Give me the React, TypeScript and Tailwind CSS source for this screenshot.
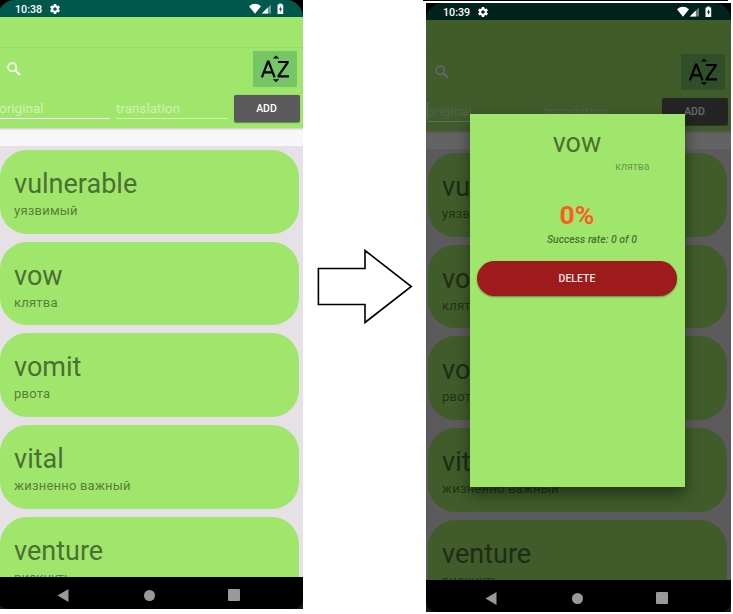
type Word = { original: string; translation: string };

const WORDS: Word[] = [
  { original: "vulnerable", translation: "уязвимый" },
  { original: "vow", translation: "клятва" },
  { original: "vomit", translation: "рвота" },
  { original: "vital", translation: "жизненно важный" },
  { original: "venture", translation: "рискнуть" },
];

function GearIcon() {
  return (
    <svg viewBox="2 2 20 20" className="ml-[7px] h-[10px] w-[10px] fill-white">
      <path d="M19.43 12.98c.04-.32.07-.64.07-.98s-.03-.66-.07-.98l2.11-1.65c.19-.15.24-.42.12-.64l-2-3.46c-.12-.22-.39-.3-.61-.22l-2.49 1c-.52-.4-1.08-.73-1.69-.98l-.38-2.65A.49.49 0 0 0 14 2h-4c-.25 0-.46.18-.49.42l-.38 2.65c-.61.25-1.17.59-1.69.98l-2.49-1c-.23-.09-.49 0-.61.22l-2 3.46c-.13.22-.07.49.12.64l2.11 1.65c-.04.32-.07.65-.07.98s.03.66.07.98l-2.11 1.65c-.19.15-.24.42-.12.64l2 3.46c.12.22.39.3.61.22l2.49-1c.52.4 1.08.73 1.69.98l.38 2.65c.03.24.24.42.49.42h4c.25 0 .46-.18.49-.42l.38-2.65c.61-.25 1.17-.59 1.69-.98l2.49 1c.23.09.49 0 .61-.22l2-3.46c.12-.22.07-.49-.12-.64l-2.11-1.65zM12 15.5c-1.93 0-3.5-1.57-3.5-3.5s1.57-3.5 3.5-3.5 3.5 1.57 3.5 3.5-1.57 3.5-3.5 3.5z" />
    </svg>
  );
}

function StatusBar({ time, dimmed }: { time: string; dimmed: boolean }) {
  return (
    <div className="h-[17px] shrink-0 bg-black">
      <div
        className={`flex h-full items-center rounded-t-[18px] pl-[17px] pr-[19.5px] ${
          dimmed ? "bg-[#00231e]" : "bg-[#00574b]"
        }`}
      >
        <span className="w-[28px] pt-px text-[10.7px] leading-[17px] font-medium whitespace-nowrap text-white">
          {time}
        </span>
        <GearIcon />
        <svg viewBox="0 0 35 12" className="ml-auto h-[12px] w-[35px]">
          <path d="M0 3.2Q6 -1.6 12 3.2L6 10.8Z" fill="#fff" />
          <path d="M22 1.4V10.6H12.8Z" fill="#fff" fillOpacity="0.4" />
          <path d="M18.8 4.6V10.6H12.8Z" fill="#fff" />
          <path d="M28.5 1.5h1.6V.4h2.5v1.1h1.6v9.5h-5.7z" fill="#fff" />
          <path d="M31.9 3.2L29.9 6.6h1.2v2.6l2-3.6h-1.2z" fill={dimmed ? "#00231e" : "#00574b"} />
        </svg>
      </div>
    </div>
  );
}

function SortButton() {
  return (
    <button className="mr-[6px] h-[36px] w-[44px] bg-[#76c667]">
      <svg viewBox="0 0 44 36" className="h-[36px] w-[44px]">
        <path d="M23 4.6L26.2 7.6H19.8Z M23 31.2L26.2 28.2H19.8Z" />
        <g fill="none" stroke="#000" strokeWidth="2.2">
          <path d="M8.9 26.3L14.9 10.6h.7l6 15.7M10.9 21.3h8.7" />
          <path d="M25 11H34.5V12L25.6 24.6V25.3H36" />
        </g>
      </svg>
    </button>
  );
}

function Header({ dimmed }: { dimmed: boolean }) {
  return (
    <header className="relative h-[111px] shrink-0 bg-[#a1e66c] shadow-[0_1px_2px_rgba(0,0,0,0.2)]">
      <div className="h-[31px] border-b border-[#97dc66]" />
      <div className="flex h-[42px] items-center justify-between pl-[8.5px] pb-[1px]">
        <svg viewBox="0 0 14 14" className="h-[14px] w-[14px] fill-none stroke-white">
          <circle cx="5.2" cy="5.2" r="4.1" strokeWidth="1.6" />
          <path d="M8.2 8.2L13 13" strokeWidth="2" />
        </svg>
        <SortButton />
      </div>
      <div className="flex h-[38px] items-start pl-px text-[13.5px] leading-[18px] text-[#cff2b5]">
        <div className="mt-[5px] flex h-[24px] w-[111px] border-b-[1.5px] border-white pt-[4px]">
          <span className={`-mr-px h-[18px] w-px ${dimmed ? "bg-white" : "bg-[#d5f4bd]"}`} />
          <span>original</span>
        </div>
        <div className="mt-[5px] ml-[6px] h-[24px] w-[112px] border-b border-[#d0f2b6] pt-[4px]">translation</div>
        <button className="mt-[5px] ml-[5.5px] h-[27px] w-[66px] rounded-[2px] bg-[#5a5a5c] text-[10.5px] leading-[28px] font-medium text-white shadow-[0_0.5px_1px_rgba(0,0,0,0.4)]">
          ADD
        </button>
      </div>
    </header>
  );
}

function WordCard({ word }: { word: Word }) {
  return (
    <li className="h-[83.8px] shrink-0 rounded-[27px] bg-[#a1e66c] pt-[17px] pl-[14.6px]">
      <div className="text-[27px] leading-[34px] text-[#4b7031]">{word.original}</div>
      <div className="mt-[1px] text-[13px] leading-[18px] tracking-[0.2px] text-[#568038]">{word.translation}</div>
    </li>
  );
}

function NavBar() {
  return (
    <nav className="z-10 h-[32px] shrink-0 bg-[#181818]">
      <div className="flex h-full items-center justify-between rounded-b-[10px] bg-black pr-[63px] pl-[59px]">
        <svg viewBox="0 0 12 13" className="mt-1 h-[13px] w-[12px]">
          <path d="M0.5 6.5L11.5 0V13Z" fill="#999" />
        </svg>
        <span className="mt-1 ml-px h-[11px] w-[11px] rounded-full bg-[#999]" />
        <span className="mt-1 h-[12px] w-[12px] rounded-[1px] bg-[#999]" />
      </div>
    </nav>
  );
}

function WordDialog() {
  return (
    <section className="absolute top-[111px] left-[43.5px] h-[373px] w-[215px] bg-[#a1e66c] px-[7.5px] text-center shadow-[0_7px_14px_rgba(0,0,0,0.45)]">
      <h2 className="pt-[12px] text-[27px] leading-[34px] text-[#4b7031]">vow</h2>
      <p className="mt-[-1px] pr-[27.5px] text-right text-[10.5px] leading-[15px] text-[#699947]">клятва</p>
      <p className="mt-[24px] text-[26.5px] leading-[34px] font-bold text-[#ff5b22]">0%</p>
      <p className="ml-[30px] text-[10.5px] leading-[15px] font-medium text-[#4b7031] italic">Success rate: 0 of 0</p>
      <button className="mt-[13.5px] block h-[35px] w-full rounded-full bg-[#9e1b1d] pt-px text-[10.5px] font-medium text-[#f3e4e4] shadow-[0_1px_2px_rgba(0,0,0,0.4)]">
        DELETE
      </button>
    </section>
  );
}

function Phone({ time, dialogOpen }: { time: string; dialogOpen: boolean }) {
  return (
    <div className="relative flex h-[609px] w-[305px] shrink-0 flex-col overflow-hidden">
      <StatusBar time={time} dimmed={dialogOpen} />
      <main className="relative flex h-[560.5px] flex-col overflow-hidden bg-[#e6e1e6]">
        <Header dimmed={dialogOpen} />
        <div className="h-[18px] shrink-0 bg-[#f7f7f7]" />
        <ul className="flex flex-col gap-[7.9px] pt-[4px] pr-[4px] pl-[1.5px]">
          {WORDS.map((word) => (
            <WordCard key={word.original} word={word} />
          ))}
        </ul>
        {dialogOpen && <div className="absolute inset-0 bg-black/60" />}
      </main>
      <NavBar />
      {dialogOpen && <WordDialog />}
    </div>
  );
}

export default function App() {
  return (
    <div className="flex h-[614px] w-[733px] overflow-hidden bg-white font-[Roboto,sans-serif]">
      <div className="flex h-[609px] w-[303px] shrink-0 justify-end overflow-hidden">
        <Phone time="10:38" dialogOpen={false} />
      </div>
      <div className="w-[120px] shrink-0 pt-[248px] pl-[13px]">
        <svg viewBox="0 0 98 78" className="h-[78px] w-[98px]">
          <path
            d="M2.4 20.5H49V2.5L95.3 38.5L49 74.5V56.5H2.4Z"
            fill="none"
            stroke="#000"
            strokeWidth="1.6"
          />
        </svg>
      </div>
      <div className="w-[308px] shrink-0">
        <div className="mb-[2px] h-px w-[305px] bg-black" />
        <div className="pl-[3px]">
          <Phone time="10:39" dialogOpen />
        </div>
      </div>
    </div>
  );
}
